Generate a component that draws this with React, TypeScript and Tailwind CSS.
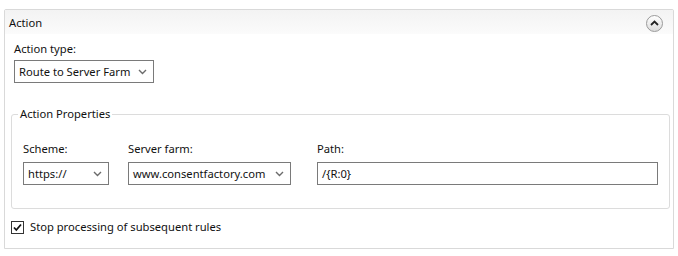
import React from "react";

const font = { fontFamily: '"Segoe UI", "Noto Sans", "Open Sans", sans-serif' };

const Chevron = () => (
  <svg width="9" height="6" viewBox="0 0 9 6" className="shrink-0">
    <path d="M1 1 L4.5 4.5 L8 1" fill="none" stroke="#6b6b6b" strokeWidth="1.4" />
  </svg>
);

const Dropdown = ({ value, width }: { value: string; width: string }) => (
  <div className={`${width} h-[23px] border border-[#7a7a7a] bg-white flex items-center justify-between pl-[4px] pr-[6px]`}>
    <span className="text-[11.2px] text-[#111] leading-none whitespace-nowrap">{value}</span>
    <Chevron />
  </div>
);

export default function App() {
  return (
    <div className="w-[678px] h-[256px] bg-white pt-[9px] pl-[4px]" style={font}>
      <div className="w-[670px] h-[240px] border border-[#d9d9d9] rounded-t-[2px] bg-white">
        {/* header */}
        <div className="h-[24px] bg-gradient-to-b from-[#f3f3f3] to-[#fbfbfb] flex items-center justify-between pl-[4px] pr-[10px]">
          <span className="text-[11.2px] text-[#111] pt-[3px]">Action</span>
          <div className="w-[17px] h-[17px] rounded-full border border-[#9a9a9a] bg-gradient-to-b from-white to-[#dcdcdc] flex items-center justify-center mt-[2px]">
            <svg width="9" height="6" viewBox="0 0 9 6">
              <path d="M1 5 L4.5 1.5 L8 5" fill="none" stroke="#222" strokeWidth="1.8" />
            </svg>
          </div>
        </div>

        <div className="pl-[9px] pt-[7px]">
          <div className="text-[11.2px] leading-[16px] text-[#111]">Action type:</div>
          <div className="mt-[3px]">
            <Dropdown value="Route to Server Farm" width="w-[140px]" />
          </div>
        </div>

        <fieldset className="ml-[6px] mt-[23px] w-[655px] h-[103px] border border-[#dcdcdc] rounded-[3px] pt-[19px]">
          <legend className="text-[11.2px] leading-[16px] text-[#111] px-[2px] ml-[6px]">Action Properties</legend>
          <div className="flex px-[11px]">
            <div className="w-[105px]">
              <div className="text-[11.2px] leading-[16px] text-[#111]">Scheme:</div>
              <div className="mt-[5px]">
                <Dropdown value="https://" width="w-[86px]" />
              </div>
            </div>
            <div className="w-[189px]">
              <div className="text-[11.2px] leading-[16px] text-[#111]">Server farm:</div>
              <div className="mt-[5px]">
                <Dropdown value="www.consentfactory.com" width="w-[163px]" />
              </div>
            </div>
            <div className="flex-1">
              <div className="text-[11.2px] leading-[16px] text-[#111]">Path:</div>
              <div className="mt-[5px] w-[341px] h-[23px] border border-[#7a7a7a] bg-white flex items-center pl-[4px]">
                <span className="text-[11.2px] text-[#111] leading-none">/{"{R:0}"}</span>
              </div>
            </div>
          </div>
        </fieldset>

        <div className="flex items-center ml-[6px] mt-[10px] gap-[6px]">
          <svg width="13" height="13" viewBox="0 0 13 13">
            <rect x="0.5" y="0.5" width="12" height="12" fill="#fff" stroke="#333" />
            <path d="M3 6.5 L5.3 9 L10 3.5" fill="none" stroke="#111" strokeWidth="1.8" />
          </svg>
          <span className="text-[11.2px] leading-[16px] text-[#111]">Stop processing of subsequent rules</span>
        </div>
      </div>
    </div>
  );
}
